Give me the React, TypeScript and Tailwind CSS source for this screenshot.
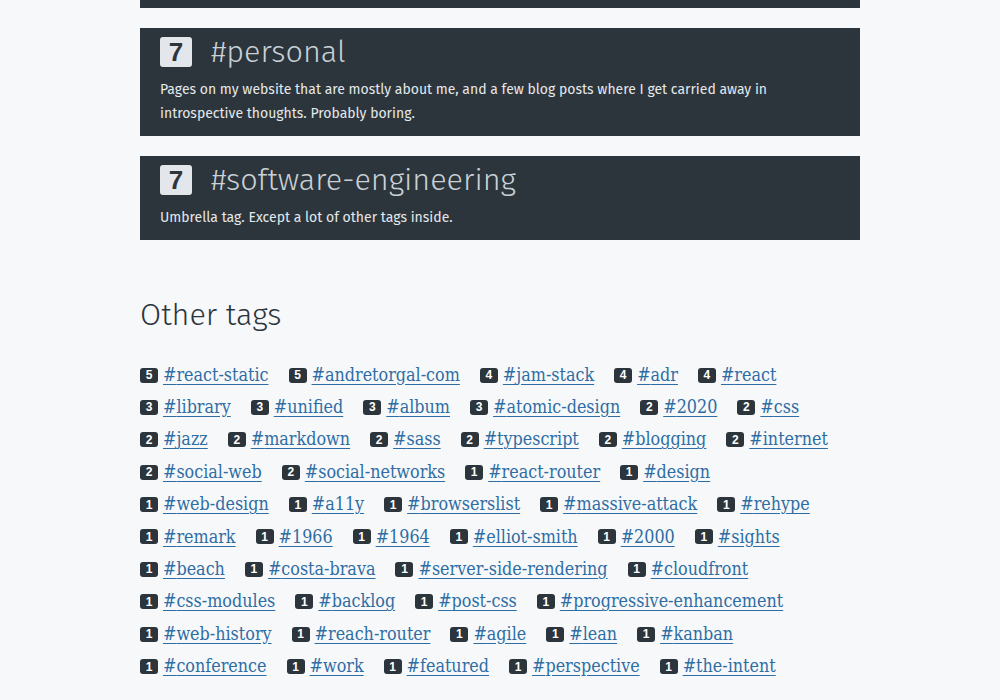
import React from "react";

const rows: [number, string][][] = [
  [[5, "react-static"], [5, "andretorgal-com"], [4, "jam-stack"], [4, "adr"], [4, "react"]],
  [[3, "library"], [3, "unified"], [3, "album"], [3, "atomic-design"], [2, "2020"], [2, "css"]],
  [[2, "jazz"], [2, "markdown"], [2, "sass"], [2, "typescript"], [2, "blogging"], [2, "internet"]],
  [[2, "social-web"], [2, "social-networks"], [1, "react-router"], [1, "design"]],
  [[1, "web-design"], [1, "a11y"], [1, "browserslist"], [1, "massive-attack"], [1, "rehype"]],
  [[1, "remark"], [1, "1966"], [1, "1964"], [1, "elliot-smith"], [1, "2000"], [1, "sights"]],
  [[1, "beach"], [1, "costa-brava"], [1, "server-side-rendering"], [1, "cloudfront"]],
  [[1, "css-modules"], [1, "backlog"], [1, "post-css"], [1, "progressive-enhancement"]],
  [[1, "web-history"], [1, "reach-router"], [1, "agile"], [1, "lean"], [1, "kanban"]],
  [[1, "conference"], [1, "work"], [1, "featured"], [1, "perspective"], [1, "the-intent"]],
];

function Card({ title, children }: { title: string; children: React.ReactNode }) {
  return (
    <div className="bg-[#2c353c] px-5 pt-[9px] pb-[10px]">
      <div className="flex items-center gap-[19px] h-[30px]">
        <span className="w-8 h-[30px] rounded-[3px] bg-[#e3e7eb] text-[#2c353c] flex items-center justify-center text-[26px] font-bold font-['Liberation_Sans',sans-serif]">
          7
        </span>
        <span className="text-[30.6px] font-light text-[#c9d0d6] font-['Fira_Sans','Lato',sans-serif] leading-none">
          {title}
        </span>
      </div>
      <p className="mt-[11px] text-[14px] leading-[24px] text-[#e4e8eb] font-['Fira_Sans','Lato',sans-serif]">
        {children}
      </p>
    </div>
  );
}

export default function App() {
  return (
    <div className="min-h-[700px] bg-[#f7f8fa] overflow-hidden">
      <div className="w-[720px] mx-auto flex flex-col gap-5">
        <div className="h-[8px] bg-[#2c353c]" />
        <Card title="#personal">
          Pages on my website that are mostly about me, and a few blog posts where I get carried away in introspective thoughts. Probably boring.
        </Card>
        <Card title="#software-engineering">Umbrella tag. Except a lot of other tags inside.</Card>
      </div>
      <div className="w-[720px] mx-auto">
        <h2 className="mt-[55px] text-[30.6px] font-light text-[#2c353c] font-['Fira_Sans','Lato',sans-serif] leading-[40px]">
          Other tags
        </h2>
        <div className="mt-[29px] flex flex-col gap-y-[10.4px]">
          {rows.map((row, i) => (
            <div key={i} className="flex gap-x-5 whitespace-nowrap">
              {row.map(([n, t]) => (
                <a key={t} href="#" className="flex items-center gap-[5px] h-[22px]">
                  <span className="w-[18px] h-[15px] rounded-[3px] bg-[#2c353c] text-white text-[12px] font-extrabold flex items-center justify-center font-['Liberation_Sans',sans-serif]">
                    {n}
                  </span>
                  <span className="text-[17.8px] text-[#2e6da4] underline underline-offset-[3px] font-['DejaVu_Serif_Condensed','DejaVu_Serif',serif]">
                    #{t}
                  </span>
                </a>
              ))}
            </div>
          ))}
        </div>
      </div>
    </div>
  );
}
